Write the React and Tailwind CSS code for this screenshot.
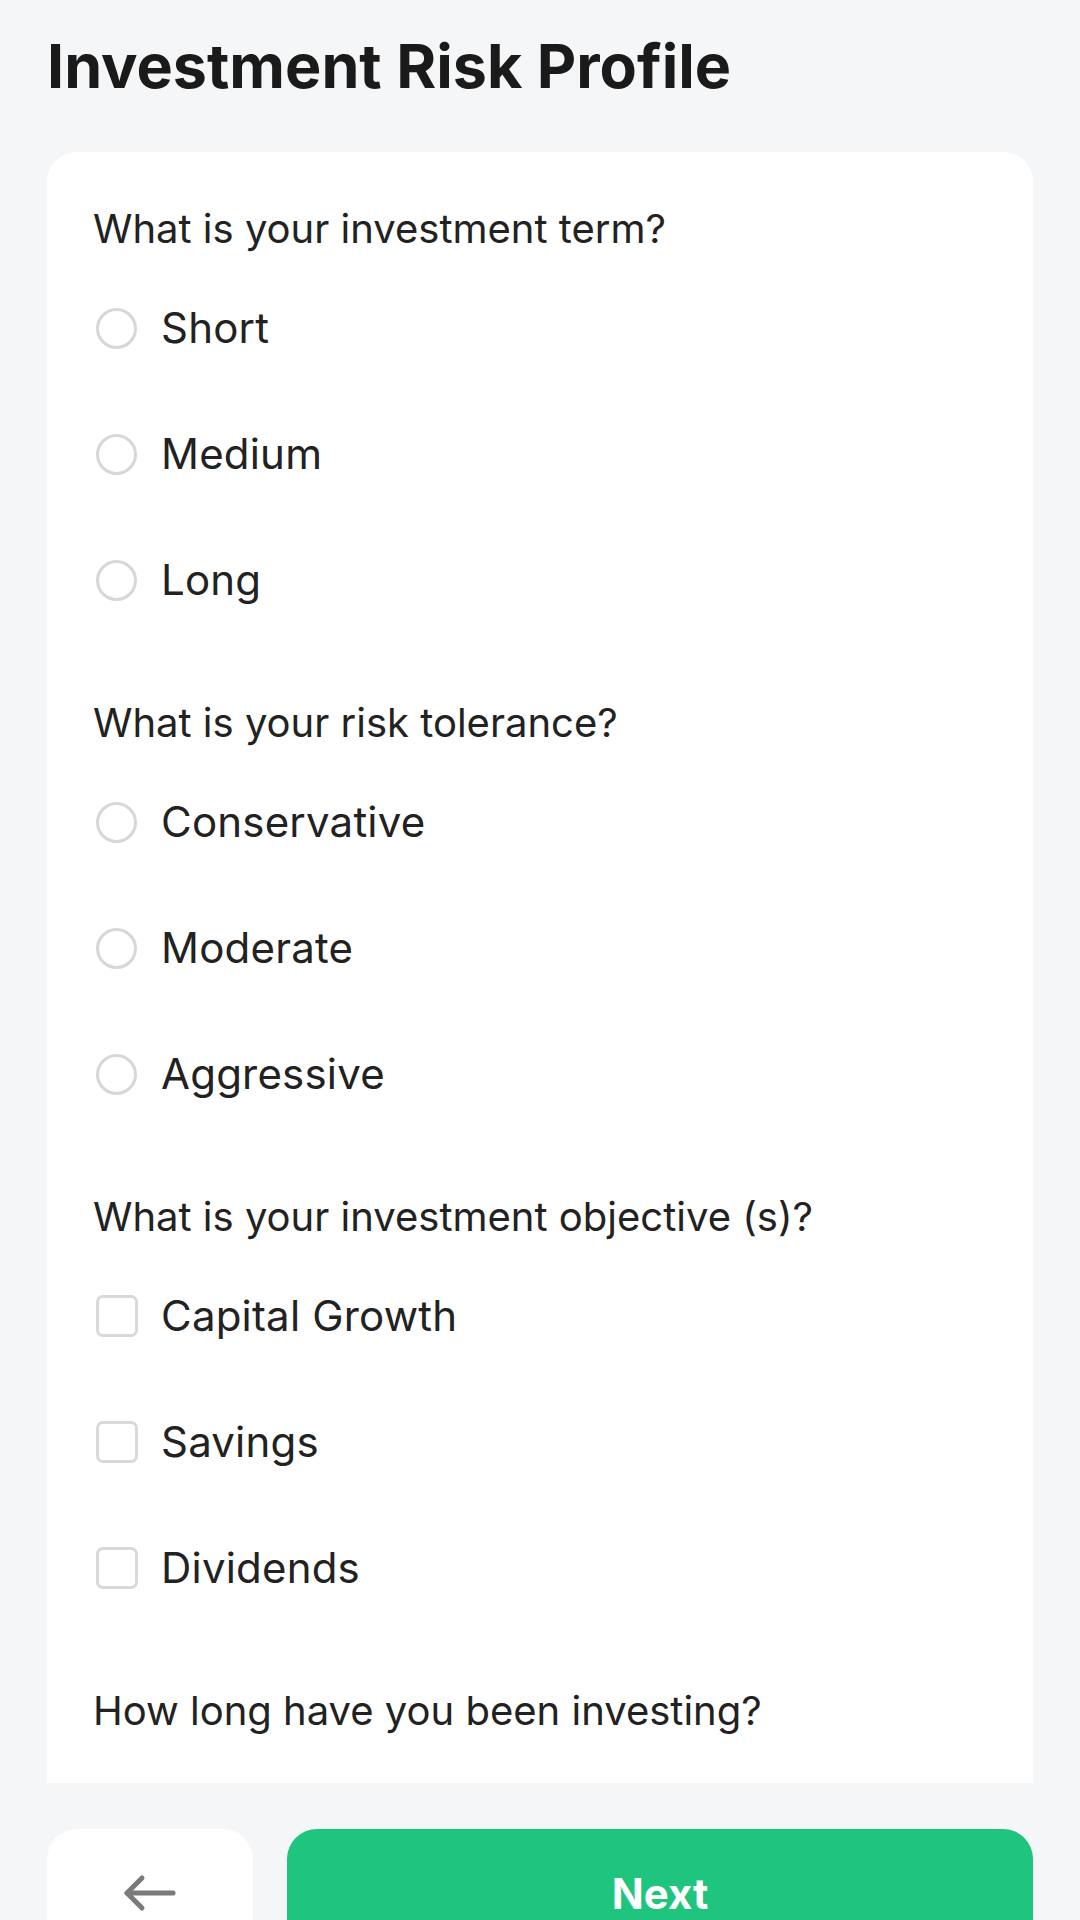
import React from "react";

const sections = [
  { q: "What is your investment term?", type: "radio", opts: ["Short", "Medium", "Long"] },
  { q: "What is your risk tolerance?", type: "radio", opts: ["Conservative", "Moderate", "Aggressive"] },
  { q: "What is your investment objective (s)?", type: "check", opts: ["Capital Growth", "Savings", "Dividends"] },
  { q: "How long have you been investing?", type: "radio", opts: [] },
];

function Indicator({ type }) {
  return (
    <div className="w-[47px] h-[47px] flex items-center justify-center shrink-0">
      {type === "radio" ? (
        <div className="w-[41px] h-[41px] rounded-full border-[3px] border-[#d7d7d7] bg-white" />
      ) : (
        <div className="w-[42px] h-[42px] rounded-[7px] border-[3px] border-[#d9d9d9] bg-white" />
      )}
    </div>
  );
}

export default function App() {
  return (
    <div
      className="w-[1080px] min-h-[1960px] bg-[#f5f6f8] px-[47px] flex flex-col"
      style={{ fontFamily: "Inter, 'Noto Sans', sans-serif" }}
    >
      <h1 className="mt-[30px] text-[61px] leading-[72px] font-bold text-[#1a1a1a]">
        Investment Risk Profile
      </h1>
      <div className="mt-[50px] h-[1631px] overflow-hidden rounded-t-[30px] bg-white px-[46px] pt-[53px]">
        <div className="flex flex-col gap-[56px]">
          {sections.map((s) => (
            <div key={s.q} className="flex flex-col">
              <p className="text-[40px] leading-[48px] text-[#222222]">{s.q}</p>
              {s.opts.length > 0 && (
                <div className="mt-[12px] flex flex-col">
                  {s.opts.map((o) => (
                    <div key={o} className="h-[126px] flex items-center gap-[21px]">
                      <Indicator type={s.type} />
                      <span className="text-[42px] leading-[48px] text-[#222222] tracking-[0.2px]">{o}</span>
                    </div>
                  ))}
                </div>
              )}
            </div>
          ))}
        </div>
      </div>
      <div className="mt-[46px] flex gap-[34px]">
        <button className="w-[206px] h-[128px] rounded-[30px] bg-white flex items-center justify-center">
          <svg width="56" height="40" viewBox="0 0 56 40" fill="none" stroke="#7a7a7a" strokeWidth="5" strokeLinecap="round" strokeLinejoin="round">
            <path d="M51 20H5" />
            <path d="M20 5L5 20l15 15" />
          </svg>
        </button>
        <button className="flex-1 h-[128px] rounded-[30px] bg-[#1fc47f] flex items-center justify-center text-white text-[42px] font-bold">
          Next
        </button>
      </div>
    </div>
  );
}
